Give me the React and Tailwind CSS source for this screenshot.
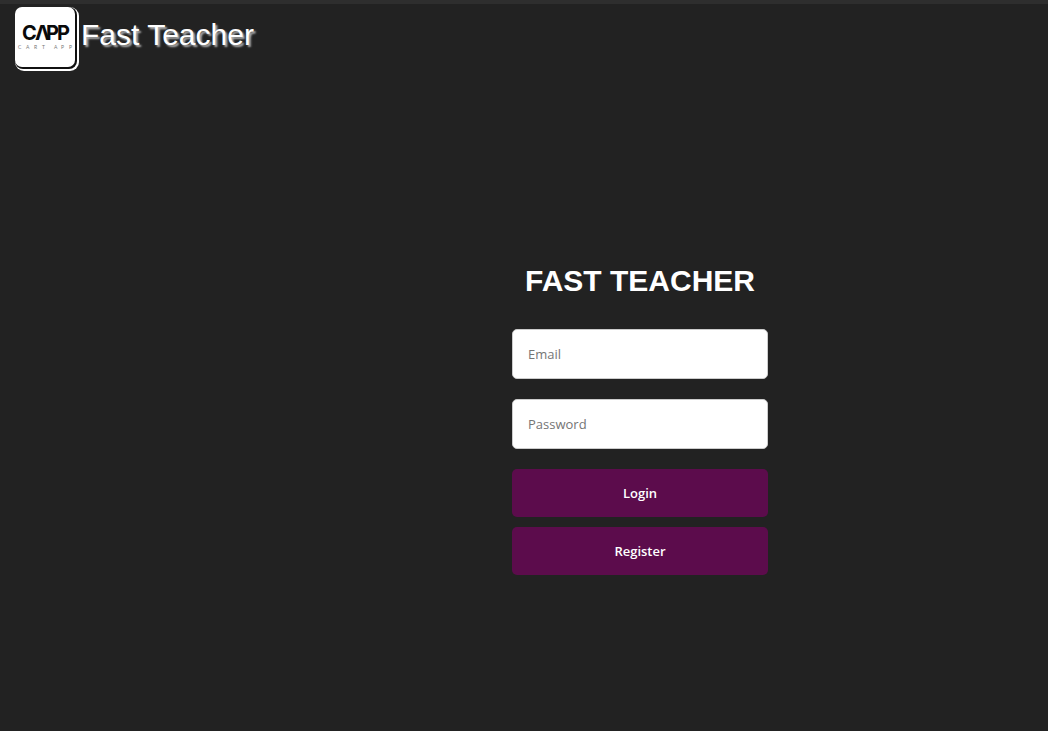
function Logo() {
  return (
    <svg viewBox="0 0 60 60" role="img" aria-label="CAPP Cart App" className="size-[60px] shrink-0 rounded-[7px] bg-white shadow-[1px_1px_0_1px_#111111,2px_2px_0_2px_#ffffff]">
      <text x="7 20 31 42" y="33" fontSize="20" fontWeight="700" fill="#0a0a0a" fontFamily="Inter, sans-serif">CΛPP</text>
      <text x="3 11 19 27 34 39 46 54" y="42" fontSize="5" fill="#777777" fontFamily="Lato, sans-serif">CART APP</text>
    </svg>
  );
}

function Field({ type, label }) {
  return (
    <input
      type={type}
      aria-label={label}
      placeholder={label}
      className="block h-[50px] w-full rounded-[5px] border border-[#cccccc] bg-white px-[15px] text-[13px] text-black placeholder:text-[#757575]"
    />
  );
}

function Button({ type, children }) {
  return (
    <button type={type} className="h-12 w-full rounded-[5px] bg-[#5c0c4c] pt-0.5 text-[13px] font-semibold text-white">
      {children}
    </button>
  );
}

export default function App() {
  return (
    <div className="flex min-h-screen flex-col border-t-4 border-[#2e2e2e] bg-[#222222] font-['Open_Sans',sans-serif]">
      <header className="flex items-start gap-[6px] px-[15px] pt-[3px]">
        <Logo />
        <span className="pt-2 font-['Liberation_Sans',Arial,sans-serif] text-[30px] leading-10 text-white [text-shadow:2px_2px_2px_#b4b4b4]">
          Fast Teacher
        </span>
      </header>
      <main className="flex flex-col items-center pt-[194px] pl-[232px]">
        <form className="w-64" onSubmit={(e) => e.preventDefault()}>
          <h1 className="text-center font-['Liberation_Sans',Arial,sans-serif] text-[30px] leading-10 font-bold whitespace-nowrap text-white">
            FAST TEACHER
          </h1>
          <div className="mt-7 flex flex-col gap-5">
            <Field type="email" label="Email" />
            <Field type="password" label="Password" />
            <div className="flex flex-col gap-[10px]">
              <Button type="submit">Login</Button>
              <Button type="button">Register</Button>
            </div>
          </div>
        </form>
      </main>
    </div>
  );
}
